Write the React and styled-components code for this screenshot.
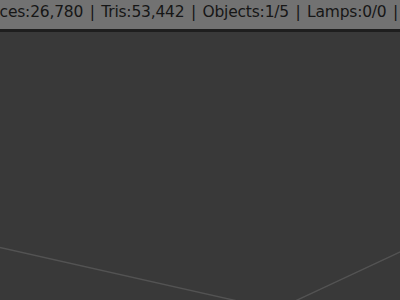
import React from "react";
import styled, { createGlobalStyle } from "styled-components";

const Global = createGlobalStyle`
  html, body { margin: 0; padding: 0; background: #393939; }
  body { width: 400px; height: 300px; overflow: hidden; }
`;

const stats = ["Faces:26,780", "Tris:53,442", "Objects:1/5", "Lamps:0/0", ""];

const App = () => (
  <Screen>
    <Global />
    <InfoBar>
      <StatsLine>
        {stats.map((s, i) => (
          <React.Fragment key={i}>
            {i > 0 && <Sep>|</Sep>}
            {s && <Stat>{s}</Stat>}
          </React.Fragment>
        ))}
      </StatsLine>
    </InfoBar>
    <Viewport>
      <Edges viewBox="0 0 400 268" preserveAspectRatio="none">
        <line x1="-2" y1="215" x2="242" y2="270" stroke="#535353" strokeWidth="1.4" />
        <line x1="293" y1="270" x2="402" y2="219" stroke="#535353" strokeWidth="1.4" />
      </Edges>
    </Viewport>
  </Screen>
);

export default App;

const Screen = styled.div`
  width: 400px;
  height: 300px;
  display: flex;
  flex-direction: column;
  overflow: hidden;
`;

const InfoBar = styled.div`
  height: 29px;
  flex-shrink: 0;
  background: #727272;
  border-bottom: 3px solid #1e1e1e;
  overflow: hidden;
  display: flex;
  align-items: center;
`;

const StatsLine = styled.div`
  display: flex;
  align-items: center;
  white-space: nowrap;
  margin-left: -17px;
  margin-top: -5px;
  font-family: "DejaVu Sans", sans-serif;
  font-size: 15.5px;
  letter-spacing: -0.2px;
  color: #161616;
`;

const Stat = styled.span``;

const Sep = styled.span`
  margin: 0 6.5px;
`;

const Viewport = styled.div`
  flex: 1;
  position: relative;
  background: #393939;
`;

const Edges = styled.svg`
  display: block;
  width: 100%;
  height: 100%;
`;
